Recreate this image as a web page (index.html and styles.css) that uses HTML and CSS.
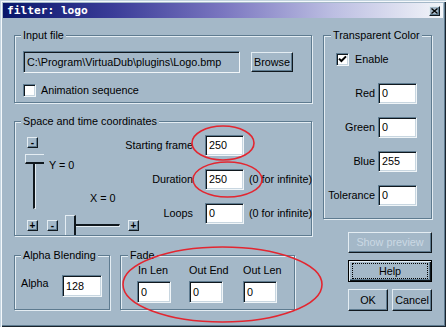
FILE: index.html
```html
<!DOCTYPE html>
<html>
<head>
<meta charset="utf-8">
<title>filter: logo</title>
<link rel="stylesheet" href="styles.css">
</head>
<body>
<div class="window">
  <div class="titlebar">
    <span class="title">filter: logo</span>
    <span class="close"><svg width="7" height="6" viewBox="0 0 7 6"><path d="M0.5 0.5L6.5 5.5M6.5 0.5L0.5 5.5" stroke="#000" stroke-width="1.3" fill="none"/></svg></span>
  </div>
  <div class="client">
    <div class="col-left">
      <fieldset class="group g-input">
        <legend>Input file</legend>
        <div class="input-body">
          <div class="path-row">
            <div class="field path">C:\Program\VirtuaDub\plugins\Logo.bmp</div>
            <div class="btn browse">Browse</div>
          </div>
          <div class="check-row">
            <span class="checkbox"></span>
            <span>Animation sequence</span>
          </div>
        </div>
      </fieldset>

      <fieldset class="group g-space">
        <legend>Space and time coordinates</legend>
        <div class="space-body">
          <div class="sliders">
            <span class="mini m-top">-</span>
            <div class="vslider"><div class="vthumb"></div><div class="vtrack"></div></div>
            <span class="ylabel">Y = 0</span>
            <span class="xlabel">X = 0</span>
            <span class="mini m-plus-left">+</span>
            <span class="mini m-minus">-</span>
            <div class="hslider"><div class="hthumb"></div><div class="htrack"></div></div>
            <span class="mini m-plus-right">+</span>
          </div>
          <div class="params">
            <span class="plabel">Starting frame</span>
            <div class="field num">250</div>
            <span class="note"></span>
            <span class="plabel">Duration</span>
            <div class="field num">250</div>
            <span class="note">(0 for infinite)</span>
            <span class="plabel">Loops</span>
            <div class="field num">0</div>
            <span class="note">(0 for infinite)</span>
          </div>
        </div>
      </fieldset>

      <div class="bottom-row">
        <fieldset class="group g-alpha">
          <legend>Alpha Blending</legend>
          <div class="alpha-body">
            <span class="alabel">Alpha</span>
            <div class="field afield">128</div>
          </div>
        </fieldset>
        <fieldset class="group g-fade">
          <legend>Fade</legend>
          <div class="fade-body">
            <span class="flabel first">In Len</span>
            <span class="flabel">Out End</span>
            <span class="flabel">Out Len</span>
            <div class="field ffield">0</div>
            <div class="field ffield">0</div>
            <div class="field ffield">0</div>
          </div>
        </fieldset>
      </div>
    </div>

    <div class="col-right">
      <fieldset class="group g-color">
        <legend>Transparent Color</legend>
        <div class="color-body">
          <div class="check-row enable">
            <span class="checkbox"><svg width="9" height="9" viewBox="0 0 9 9"><path d="M1 3.6L3.4 6L8 1.4" stroke="#000" stroke-width="2" fill="none"/></svg></span>
            <span>Enable</span>
          </div>
          <div class="color-grid">
            <span class="clabel">Red</span><div class="field cfield">0</div>
            <span class="clabel">Green</span><div class="field cfield">0</div>
            <span class="clabel">Blue</span><div class="field cfield">255</div>
            <span class="clabel">Tolerance</span><div class="field cfield">0</div>
          </div>
        </div>
      </fieldset>
      <div class="btn wide disabled">Show preview</div>
      <div class="btn wide default"><span class="focus">Help</span></div>
      <div class="ok-row">
        <div class="btn small">OK</div>
        <div class="btn small">Cancel</div>
      </div>
    </div>
  </div>

  <svg class="marks" width="446" height="327" viewBox="0 0 446 327">
    <ellipse cx="223" cy="143" rx="31" ry="17" />
    <ellipse cx="227.5" cy="179.5" rx="34.5" ry="17.5" />
    <ellipse cx="222.5" cy="284.5" rx="99.5" ry="37.5" />
  </svg>
</div>
</body>
</html>
```

FILE: styles.css
```css
* { box-sizing: border-box; }

html, body {
  margin: 0;
  padding: 0;
}

body {
  width: 446px;
  height: 327px;
  overflow: hidden;
  background: #a4b8c8;
  font-family: "Liberation Sans", Arial, sans-serif;
  font-size: 10.8px;
  line-height: 13px;
  color: #000;
}

.window {
  position: relative;
  width: 446px;
  height: 327px;
  padding: 3px 3px 0 3px;
  background: #a4b8c8;
  box-shadow:
    inset 1px 1px 0 #c4d4e0,
    inset 2px 2px 0 #f4f8fb,
    inset -1px -1px 0 #1a242c,
    inset -2px -2px 0 #5e7b90;
}

/* title bar */
.titlebar {
  height: 15px;
  display: flex;
  align-items: center;
  justify-content: space-between;
  padding: 0 3px 0 4px;
  background: linear-gradient(to right, #08166a 0%, #3a3c98 25%, #7a76c0 50%, #bcbee2 75%, #f2f5f9 100%);
}

.title {
  font-family: "DejaVu Sans Mono", "Liberation Mono", monospace;
  font-weight: bold;
  font-size: 11.2px;
  line-height: 15px;
  color: #fff;
}

.close {
  width: 11px;
  height: 10px;
  display: flex;
  align-items: center;
  justify-content: center;
  background: #a4b8c8;
  border: 1px solid;
  border-color: #e4edf3 #10181e #10181e #e4edf3;
  box-shadow: inset -1px -1px 0 #5e7b90;
}

/* client area */
.client {
  display: grid;
  grid-template-columns: 298px 109px;
  column-gap: 11px;
  padding: 11px 0 0 11px;
}

.col-left, .col-right {
  display: flex;
  flex-direction: column;
}

/* group boxes */
.group {
  margin: 0;
  padding: 0;
  min-width: 0;
  border: 1px solid #5e7b90;
  box-shadow: inset 1px 1px 0 #e4edf3, 1px 1px 0 #e4edf3;
}

.group > legend {
  margin-left: 6px;
  padding: 0 2px;
  height: 13px;
  line-height: 13px;
  background: #a4b8c8;
}

.g-color > legend,
.g-fade > legend {
  margin-left: 7px;
}

/* common controls */
.field {
  height: 21px;
  display: flex;
  align-items: center;
  padding-left: 3px;
  background: #fff;
  border: 1px solid;
  border-color: #5e7b90 #f0f5f8 #f0f5f8 #5e7b90;
  box-shadow: inset 1px 1px 0 #10181e, inset -1px -1px 0 #c8d6e0;
  white-space: nowrap;
  overflow: hidden;
}

.btn {
  display: flex;
  align-items: center;
  justify-content: center;
  background: #a4b8c8;
  border: 1px solid;
  border-color: #e4edf3 #10181e #10181e #e4edf3;
  box-shadow: inset -1px -1px 0 #5e7b90;
  white-space: nowrap;
}

.checkbox {
  width: 13px;
  height: 13px;
  flex: none;
  display: flex;
  align-items: center;
  justify-content: center;
  background: #fff;
  border: 1px solid;
  border-color: #5e7b90 #f0f5f8 #f0f5f8 #5e7b90;
  box-shadow: inset 1px 1px 0 #10181e, inset -1px -1px 0 #c8d6e0;
}

.check-row {
  display: flex;
  align-items: center;
  gap: 5px;
}

/* input file */
.g-input { height: 74px; }

.input-body {
  padding: 9px 0 0 8px;
}

.path-row {
  display: flex;
  align-items: center;
  gap: 11px;
}

.path {
  width: 217px;
  height: 22px;
  background: #a4b8c8;
  box-shadow: inset 1px 1px 0 #10181e;
}

.browse {
  width: 42px;
  height: 20px;
}

.input-body .check-row {
  margin-top: 11px;
}

/* space and time */
.g-space {
  height: 121px;
  margin-top: 12px;
}

.space-body {
  display: flex;
  padding: 7px 0 0 10px;
}

.sliders {
  flex: none;
  width: 98px;
  margin-top: 2px;
  display: grid;
  grid-template-columns: 19px 3px 11px 7px 56px 7px 11px;
  grid-template-rows: 11px 6px 55px 6px 20px;
}

.mini {
  width: 11px;
  height: 11px;
  display: flex;
  align-items: center;
  justify-content: center;
  font-size: 10px;
  line-height: 9px;
  font-weight: bold;
  background: #a4b8c8;
  border: 1px solid;
  border-color: #e4edf3 #10181e #10181e #e4edf3;
  box-shadow: inset -1px -1px 0 #5e7b90;
}

.m-top { grid-area: 1 / 1; margin-left: 2px; }
.m-plus-left { grid-area: 5 / 1; margin-left: 2px; align-self: center; }
.m-minus { grid-area: 5 / 3; align-self: center; }
.m-plus-right { grid-area: 5 / 7; align-self: center; }

.vslider {
  grid-area: 3 / 1;
  display: flex;
  flex-direction: column;
}

.vthumb {
  width: 19px;
  height: 10px;
  border-top: 1px solid #e4edf3;
  border-left: 1px solid #e4edf3;
  border-bottom: 2px solid #10181e;
}

.vtrack {
  width: 3px;
  height: 45px;
  margin-left: 8px;
  border-left: 2px solid #10181e;
  border-right: 1px solid #e4edf3;
  border-bottom: 1px solid #e4edf3;
}

.ylabel {
  grid-row: 3;
  grid-column: 3 / 6;
  align-self: start;
  margin: 5px 0 0 2px;
  white-space: nowrap;
}

.xlabel {
  grid-row: 3;
  grid-column: 5 / 8;
  align-self: end;
  margin: 0 0 4px 25px;
  white-space: nowrap;
}

.hslider {
  grid-area: 5 / 5;
  display: flex;
  align-items: center;
}

.hthumb {
  width: 11px;
  height: 20px;
  flex: none;
  border-top: 1px solid #e4edf3;
  border-left: 1px solid #e4edf3;
  border-right: 2px solid #10181e;
}

.htrack {
  width: 44px;
  height: 3px;
  border-top: 2px solid #10181e;
  border-bottom: 1px solid #e4edf3;
  border-right: 1px solid #e4edf3;
}

.params {
  display: grid;
  grid-template-columns: 77px 39px auto;
  grid-template-rows: 21px 21px 21px;
  column-gap: 5px;
  row-gap: 13px;
  align-items: center;
}

.plabel {
  text-align: right;
  padding-right: 7px;
  white-space: nowrap;
}

.note {
  white-space: nowrap;
}

/* bottom row */
.bottom-row {
  display: flex;
  gap: 10px;
  margin-top: 13px;
}

.g-alpha {
  width: 96px;
  height: 61px;
}

.alpha-body {
  display: flex;
  padding: 13px 0 0 6px;
}

.alabel {
  margin-top: 2px;
}

.afield {
  width: 40px;
  height: 22px;
  margin-left: auto;
  margin-right: 7px;
}

.g-fade {
  width: 175px;
  height: 61px;
}

.fade-body {
  display: grid;
  grid-template-columns: 52px 54px 34px;
  grid-template-rows: 13px 22px;
  row-gap: 4px;
  padding: 2px 0 0 16px;
}

.flabel {
  white-space: nowrap;
}

.flabel.first {
  padding-left: 1px;
}

.ffield {
  width: 34px;
  height: 22px;
}

/* transparent color */
.g-color {
  height: 190px;
}

.color-body {
  padding-top: 11px;
}

.enable {
  margin-left: 12px;
  gap: 6px;
}

.color-grid {
  display: grid;
  grid-template-columns: 51px 39px;
  grid-auto-rows: 21px;
  column-gap: 3px;
  row-gap: 13px;
  align-items: center;
  margin-top: 17px;
}

.clabel {
  text-align: right;
  white-space: nowrap;
}

/* right buttons */
.wide {
  width: 84px;
  margin-left: 25px;
}

.disabled {
  height: 21px;
  margin-top: 13px;
  color: #cbd9e4;
}

.default {
  height: 22px;
  margin-top: 7px;
  padding: 2px 3px;
  border: 1px solid #000;
  box-shadow: inset 1px 1px 0 #e4edf3, inset -1px -1px 0 #10181e, inset -2px -2px 0 #5e7b90;
  align-items: stretch;
}

.focus {
  flex: 1;
  display: flex;
  align-items: center;
  justify-content: center;
  border: 1px dotted #000;
}

.ok-row {
  display: flex;
  gap: 4px;
  margin: 7px 0 0 25px;
}

.small {
  width: 40px;
  height: 22px;
}

/* red annotation marks */
.marks {
  position: absolute;
  left: 0;
  top: 0;
  pointer-events: none;
}

.marks ellipse {
  fill: none;
  stroke: #e32630;
  stroke-width: 1.6;
}
```
